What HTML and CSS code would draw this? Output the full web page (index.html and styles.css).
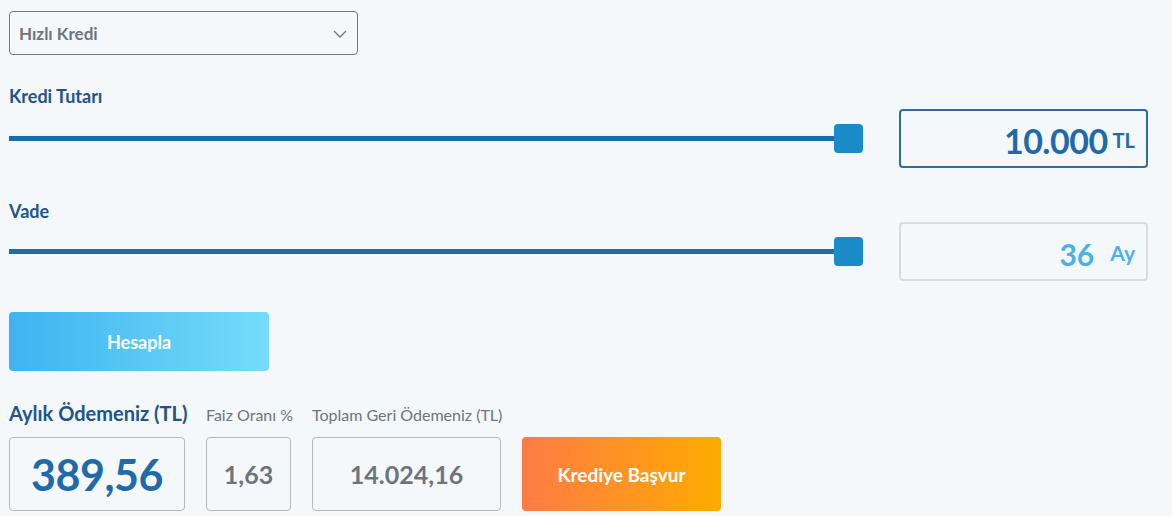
FILE: index.html
```html
<!DOCTYPE html>
<html lang="tr">
<head>
<meta charset="utf-8">
<title>Kredi Hesaplama</title>
<link rel="stylesheet" href="styles.css">
</head>
<body>
<div class="page">
  <div class="select">
    <span class="select-text">Hızlı Kredi</span>
    <svg class="chevron" width="14" height="8" viewBox="0 0 14 8"><polyline points="1,1 7,7 13,1" fill="none" stroke="#6c757d" stroke-width="1.3"/></svg>
  </div>

  <div class="field-label first">Kredi Tutarı</div>
  <div class="row">
    <div class="slider"><div class="track"></div><div class="thumb"></div></div>
    <div class="valbox active"><span class="val-num">10.000</span><span class="val-unit tl">TL</span></div>
  </div>

  <div class="field-label second">Vade</div>
  <div class="row row2">
    <div class="slider"><div class="track"></div><div class="thumb"></div></div>
    <div class="valbox light"><span class="val-num small">36</span><span class="val-unit ay">Ay</span></div>
  </div>

  <button class="btn-calc">Hesapla</button>

  <div class="results">
    <div class="res-col col-monthly">
      <div class="res-label main">Aylık Ödemeniz (TL)</div>
      <div class="res-box"><span class="res-big">389,56</span></div>
    </div>
    <div class="res-col col-rate">
      <div class="res-label">Faiz Oranı %</div>
      <div class="res-box"><span class="res-mid">1,63</span></div>
    </div>
    <div class="res-col col-total">
      <div class="res-label">Toplam Geri Ödemeniz (TL)</div>
      <div class="res-box"><span class="res-mid">14.024,16</span></div>
    </div>
    <button class="btn-apply">Krediye Başvur</button>
  </div>
</div>
</body>
</html>
```

FILE: styles.css
```css
* { box-sizing: border-box; }
html, body { margin: 0; padding: 0; }
body {
  background: #f5f8fb;
  font-family: Lato, "Open Sans", sans-serif;
  color: #1d5489;
}
.page {
  padding: 11px 24px 0 9px;
}
.select {
  width: 349px;
  height: 44px;
  border: 1px solid #6f767d;
  border-radius: 4px;
  display: flex;
  align-items: center;
  justify-content: space-between;
  padding: 0 10px 0 9px;
}
.select-text {
  font-size: 17px;
  font-weight: 700;
  color: #6c757d;
}
.chevron { display: block; margin-top: 1px; }

.field-label {
  font-size: 18px;
  font-weight: 700;
  line-height: 20px;
  color: #1d5489;
}
.field-label.first { margin-top: 31px; }
.field-label.second { margin-top: 33px; }

.row {
  margin-top: 3px;
  display: grid;
  grid-template-columns: 1fr 249px;
  column-gap: 36px;
  align-items: center;
}
.row.row2 { margin-top: 1px; }
.slider {
  display: flex;
  align-items: center;
  height: 30px;
}
.track {
  flex: 1;
  height: 5px;
  background: #1e6ca8;
}
.thumb {
  width: 29px;
  height: 29px;
  margin-left: -14px;
  border-radius: 4px;
  background: #1b8bc7;
}
.valbox {
  height: 59px;
  border-radius: 4px;
  display: flex;
  align-items: center;
  justify-content: flex-end;
  padding-right: 11px;
}
.valbox.active {
  border: 2px solid #2d6ca5;
  color: #1f6aa9;
}
.valbox.light {
  border: 2px solid #d6dce1;
  color: #4bb2e8;
}
.val-num {
  font-size: 34px;
  font-weight: 700;
  letter-spacing: -0.5px;
  line-height: 1;
  margin-top: 4px;
}
.val-num.small { font-size: 30px; letter-spacing: 0; }
.val-unit { font-weight: 700; line-height: 1; }
.val-unit.tl { font-size: 20px; margin-left: 5px; margin-top: 2px; }
.val-unit.ay { font-size: 21px; margin-left: 16px; margin-top: 2px; }

.btn-calc {
  display: block;
  margin-top: 31px;
  width: 260px;
  height: 59px;
  border: 0;
  border-radius: 4px;
  background: linear-gradient(90deg, #3db3f1, #75dcfa);
  color: #ffffff;
  font-family: inherit;
  font-size: 18px;
  font-weight: 700;
  padding: 0;
}

.results {
  margin-top: 30px;
  display: flex;
  align-items: flex-end;
  gap: 21px;
}
.res-col { display: flex; flex-direction: column; }
.col-monthly { width: 176px; }
.col-rate { width: 85px; }
.col-total { width: 189px; }
.res-label {
  height: 24px;
  margin-bottom: 12px;
  display: flex;
  align-items: flex-end;
  white-space: nowrap;
  font-size: 16px;
  color: #6c757d;
  line-height: 20px;
}
.res-label.main {
  font-size: 20px;
  font-weight: 700;
  color: #1d5489;
  line-height: 24px;
}
.res-box {
  height: 74px;
  border: 1px solid #b4b9be;
  border-radius: 4px;
  display: flex;
  align-items: center;
  justify-content: center;
}
.res-big {
  font-size: 43px;
  font-weight: 700;
  color: #1f6aa9;
  letter-spacing: -0.5px;
}
.res-mid {
  font-size: 25px;
  font-weight: 700;
  color: #6c757d;
}
.btn-apply {
  width: 199px;
  height: 74px;
  border: 0;
  border-radius: 4px;
  background: linear-gradient(90deg, #ff7b45, #ffab00);
  color: #ffffff;
  font-family: inherit;
  font-size: 19px;
  font-weight: 700;
  padding: 0;
}
```
